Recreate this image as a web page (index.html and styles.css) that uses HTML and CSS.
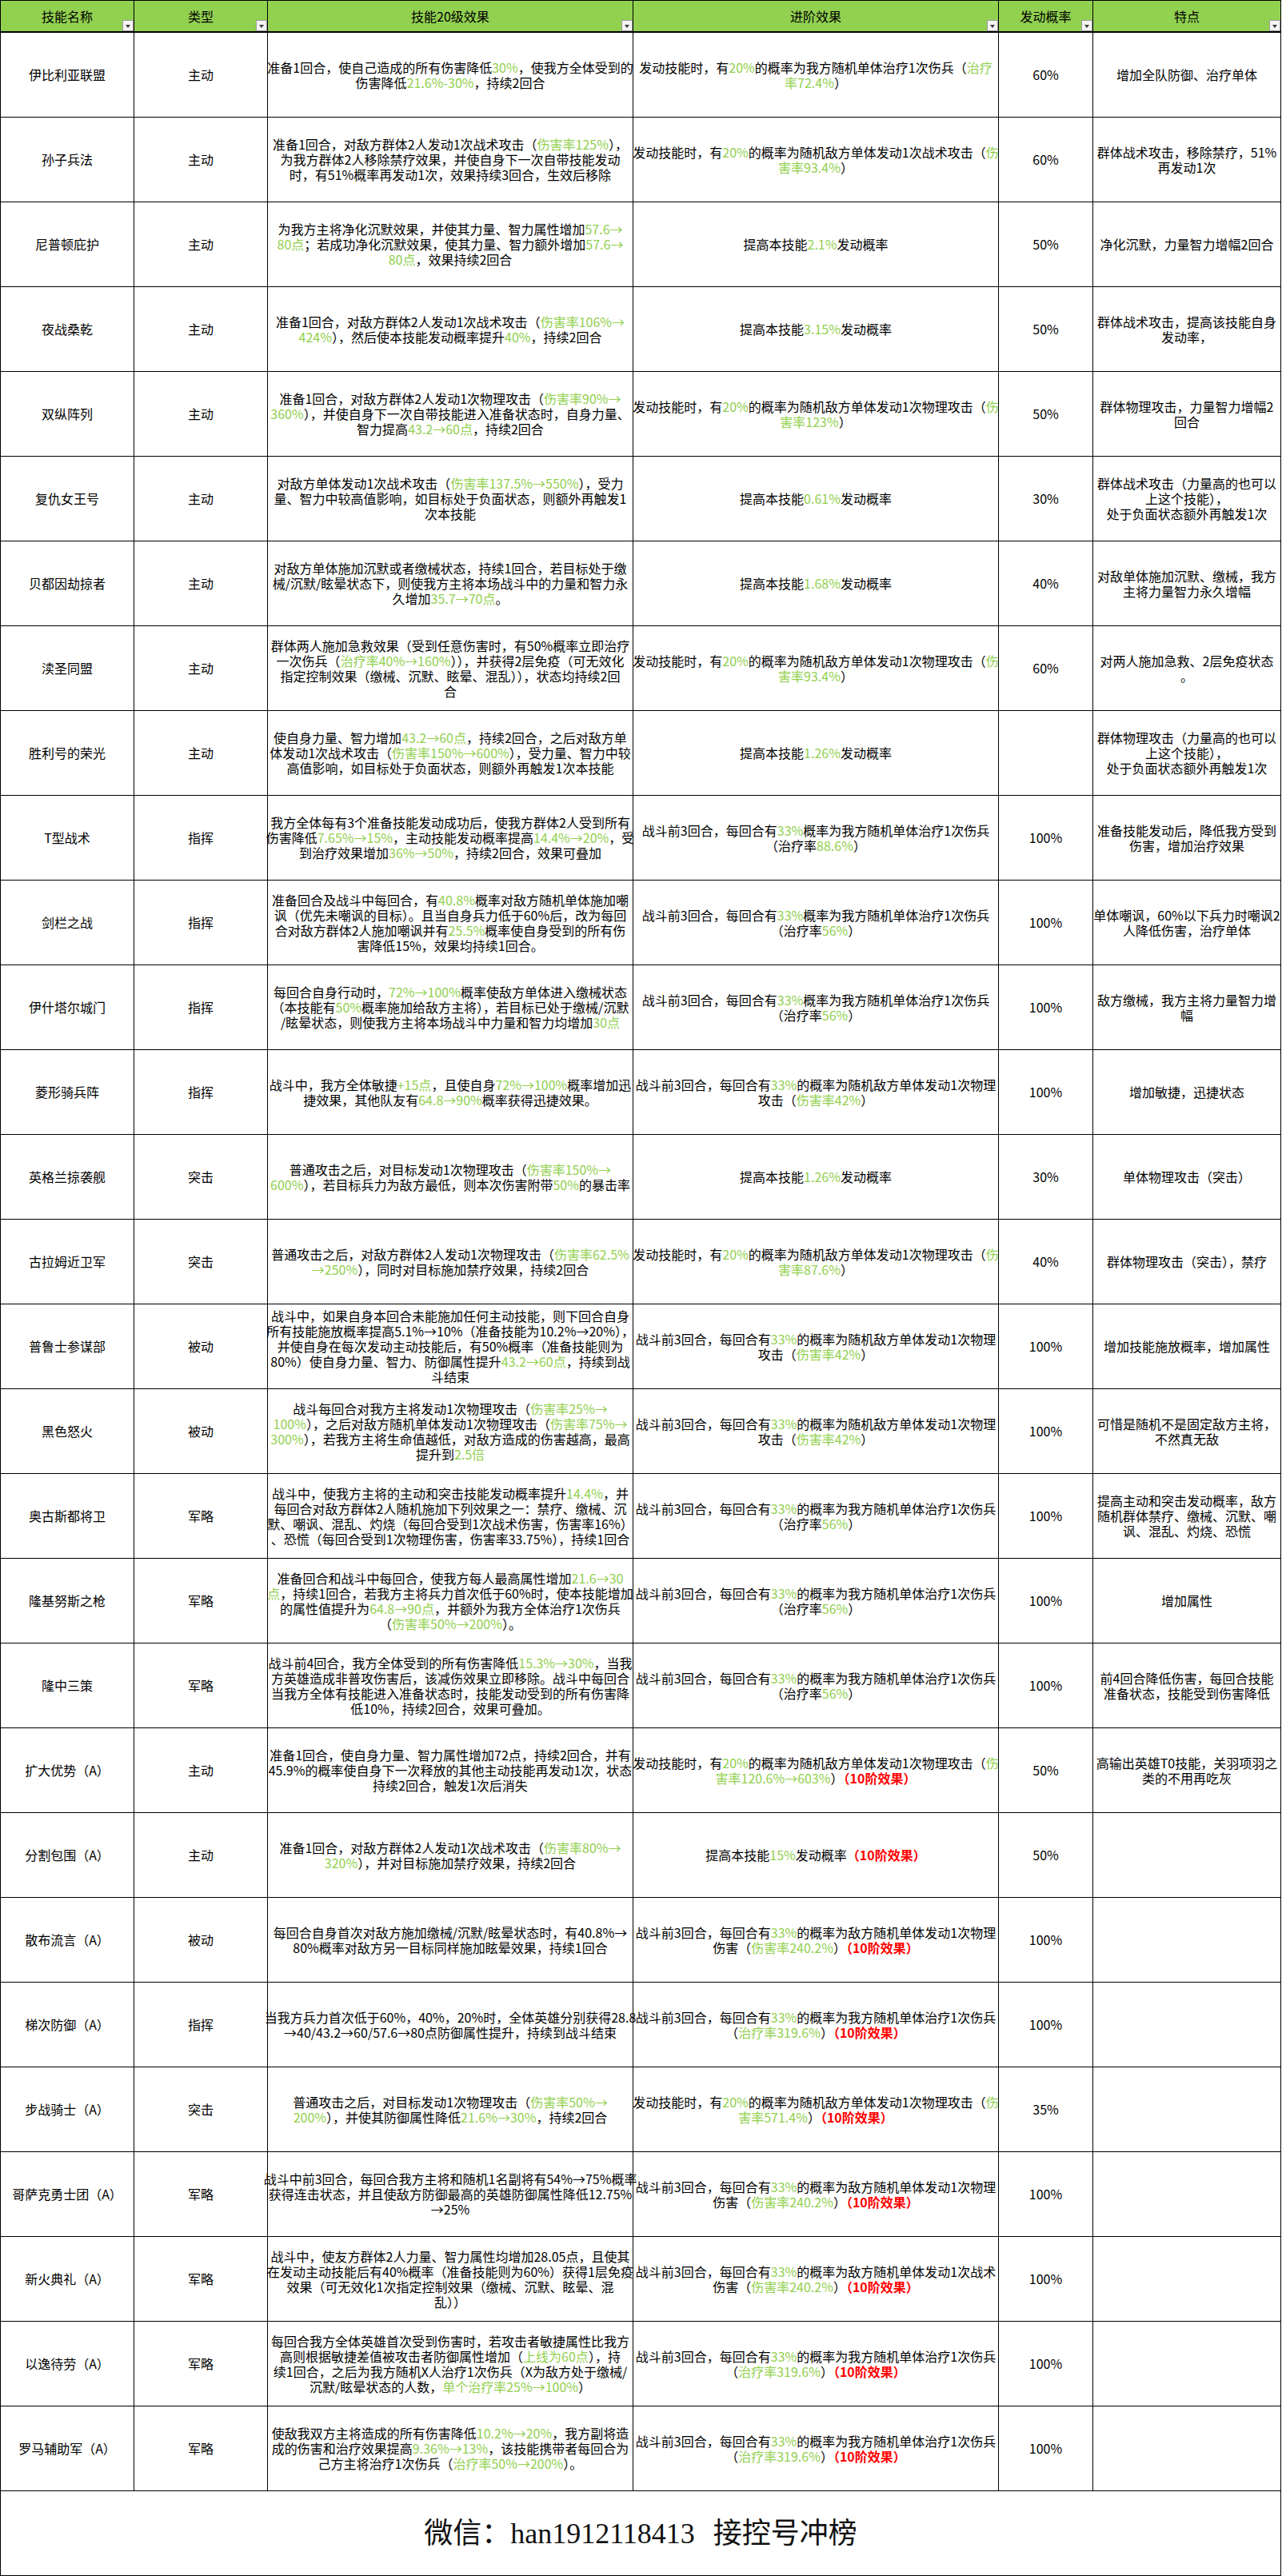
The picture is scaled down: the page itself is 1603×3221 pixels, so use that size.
FILE: index.html
```html
<!DOCTYPE html>
<html lang="zh-CN">
<head>
<meta charset="utf-8">
<title>技能表</title>
<link rel="stylesheet" href="styles.css">
</head>
<body>
<div class="sheet">
  <div class="hd">技能名称<span class="fb"></span></div>
  <div class="hd">类型<span class="fb"></span></div>
  <div class="hd">技能20级效果<span class="fb"></span></div>
  <div class="hd">进阶效果<span class="fb"></span></div>
  <div class="hd">发动概率<span class="fb"></span></div>
  <div class="hd">特点<span class="fb"></span></div>

  <div><p>伊比利亚联盟</p></div>
  <div><p>主动</p></div>
  <div><p>准备1回合，使自己造成的所有伤害降低<span class="g">30%</span>，使我方全体受到的<br>伤害降低<span class="g">21.6%-30%</span>，持续2回合</p></div>
  <div><p>发动技能时，有<span class="g">20%</span>的概率为我方随机单体治疗1次伤兵（<span class="g">治疗</span><br><span class="g">率72.4%</span>）</p></div>
  <div><p>60%</p></div>
  <div><p>增加全队防御、治疗单体</p></div>

  <div><p>孙子兵法</p></div>
  <div><p>主动</p></div>
  <div><p>准备1回合，对敌方群体2人发动1次战术攻击（<span class="g">伤害率125%</span>），<br>为我方群体2人移除禁疗效果，并使自身下一次自带技能发动<br>时，有51%概率再发动1次，效果持续3回合，生效后移除</p></div>
  <div><p>发动技能时，有<span class="g">20%</span>的概率为随机敌方单体发动1次战术攻击（<span class="g">伤</span><br><span class="g">害率93.4%</span>）</p></div>
  <div><p>60%</p></div>
  <div><p>群体战术攻击，移除禁疗，51%<br>再发动1次</p></div>

  <div><p>尼普顿庇护</p></div>
  <div><p>主动</p></div>
  <div><p>为我方主将净化沉默效果，并使其力量、智力属性增加<span class="g">57.6→</span><br><span class="g">80点</span>；若成功净化沉默效果，使其力量、智力额外增加<span class="g">57.6→</span><br><span class="g">80点</span>，效果持续2回合</p></div>
  <div><p>提高本技能<span class="g">2.1%</span>发动概率</p></div>
  <div><p>50%</p></div>
  <div><p>净化沉默，力量智力增幅2回合</p></div>

  <div><p>夜战桑乾</p></div>
  <div><p>主动</p></div>
  <div><p>准备1回合，对敌方群体2人发动1次战术攻击（<span class="g">伤害率106%→</span><br><span class="g">424%</span>），然后使本技能发动概率提升<span class="g">40%</span>，持续2回合</p></div>
  <div><p>提高本技能<span class="g">3.15%</span>发动概率</p></div>
  <div><p>50%</p></div>
  <div><p>群体战术攻击，提高该技能自身<br>发动率，</p></div>

  <div><p>双纵阵列</p></div>
  <div><p>主动</p></div>
  <div><p>准备1回合，对敌方群体2人发动1次物理攻击（<span class="g">伤害率90%→</span><br><span class="g">360%</span>），并使自身下一次自带技能进入准备状态时，自身力量、<br>智力提高<span class="g">43.2→60点</span>，持续2回合</p></div>
  <div><p>发动技能时，有<span class="g">20%</span>的概率为随机敌方单体发动1次物理攻击（<span class="g">伤</span><br><span class="g">害率123%</span>）</p></div>
  <div><p>50%</p></div>
  <div><p>群体物理攻击，力量智力增幅2<br>回合</p></div>

  <div><p>复仇女王号</p></div>
  <div><p>主动</p></div>
  <div><p>对敌方单体发动1次战术攻击（<span class="g">伤害率137.5%→550%</span>），受力<br>量、智力中较高值影响，如目标处于负面状态，则额外再触发1<br>次本技能</p></div>
  <div><p>提高本技能<span class="g">0.61%</span>发动概率</p></div>
  <div><p>30%</p></div>
  <div><p>群体战术攻击（力量高的也可以<br>上这个技能），<br>处于负面状态额外再触发1次</p></div>

  <div><p>贝都因劫掠者</p></div>
  <div><p>主动</p></div>
  <div><p>对敌方单体施加沉默或者缴械状态，持续1回合，若目标处于缴<br>械/沉默/眩晕状态下，则使我方主将本场战斗中的力量和智力永<br>久增加<span class="g">35.7→70点</span>。</p></div>
  <div><p>提高本技能<span class="g">1.68%</span>发动概率</p></div>
  <div><p>40%</p></div>
  <div><p>对敌单体施加沉默、缴械，我方<br>主将力量智力永久增幅</p></div>

  <div><p>渎圣同盟</p></div>
  <div><p>主动</p></div>
  <div><p>群体两人施加急救效果（受到任意伤害时，有50%概率立即治疗<br>一次伤兵（<span class="g">治疗率40%→160%</span>）），并获得2层免疫（可无效化<br>指定控制效果（缴械、沉默、眩晕、混乱）），状态均持续2回<br>合</p></div>
  <div><p>发动技能时，有<span class="g">20%</span>的概率为随机敌方单体发动1次物理攻击（<span class="g">伤</span><br><span class="g">害率93.4%</span>）</p></div>
  <div><p>60%</p></div>
  <div><p>对两人施加急救、2层免疫状态<br>。</p></div>

  <div><p>胜利号的荣光</p></div>
  <div><p>主动</p></div>
  <div><p>使自身力量、智力增加<span class="g">43.2→60点</span>，持续2回合，之后对敌方单<br>体发动1次战术攻击（<span class="g">伤害率150%→600%</span>），受力量、智力中较<br>高值影响，如目标处于负面状态，则额外再触发1次本技能</p></div>
  <div><p>提高本技能<span class="g">1.26%</span>发动概率</p></div>
  <div><p></p></div>
  <div><p>群体物理攻击（力量高的也可以<br>上这个技能），<br>处于负面状态额外再触发1次</p></div>

  <div><p>T型战术</p></div>
  <div><p>指挥</p></div>
  <div><p>我方全体每有3个准备技能发动成功后，使我方群体2人受到所有<br>伤害降低<span class="g">7.65%→15%</span>，主动技能发动概率提高<span class="g">14.4%→20%</span>，受<br>到治疗效果增加<span class="g">36%→50%</span>，持续2回合，效果可叠加</p></div>
  <div><p>战斗前3回合，每回合有<span class="g">33%</span>概率为我方随机单体治疗1次伤兵<br>（治疗率<span class="g">88.6%</span>）</p></div>
  <div><p>100%</p></div>
  <div><p>准备技能发动后，降低我方受到<br>伤害，增加治疗效果</p></div>

  <div><p>剑栏之战</p></div>
  <div><p>指挥</p></div>
  <div><p>准备回合及战斗中每回合，有<span class="g">40.8%</span>概率对敌方随机单体施加嘲<br>讽（优先未嘲讽的目标）。且当自身兵力低于60%后，改为每回<br>合对敌方群体2人施加嘲讽并有<span class="g">25.5%</span>概率使自身受到的所有伤<br>害降低15%，效果均持续1回合。</p></div>
  <div><p>战斗前3回合，每回合有<span class="g">33%</span>概率为我方随机单体治疗1次伤兵<br>（治疗率<span class="g">56%</span>）</p></div>
  <div><p>100%</p></div>
  <div><p>单体嘲讽，60%以下兵力时嘲讽2<br>人降低伤害，治疗单体</p></div>

  <div><p>伊什塔尔城门</p></div>
  <div><p>指挥</p></div>
  <div><p>每回合自身行动时，<span class="g">72%→100%</span>概率使敌方单体进入缴械状态<br>（本技能有<span class="g">50%</span>概率施加给敌方主将），若目标已处于缴械/沉默<br>/眩晕状态，则使我方主将本场战斗中力量和智力均增加<span class="g">30点</span></p></div>
  <div><p>战斗前3回合，每回合有<span class="g">33%</span>概率为我方随机单体治疗1次伤兵<br>（治疗率<span class="g">56%</span>）</p></div>
  <div><p>100%</p></div>
  <div><p>敌方缴械，我方主将力量智力增<br>幅</p></div>

  <div><p>菱形骑兵阵</p></div>
  <div><p>指挥</p></div>
  <div><p>战斗中，我方全体敏捷<span class="g">+15点</span>，且使自身<span class="g">72%→100%</span>概率增加迅<br>捷效果，其他队友有<span class="g">64.8→90%</span>概率获得迅捷效果。</p></div>
  <div><p>战斗前3回合，每回合有<span class="g">33%</span>的概率为随机敌方单体发动1次物理<br>攻击（<span class="g">伤害率42%</span>）</p></div>
  <div><p>100%</p></div>
  <div><p>增加敏捷，迅捷状态</p></div>

  <div><p>英格兰掠袭舰</p></div>
  <div><p>突击</p></div>
  <div><p>普通攻击之后，对目标发动1次物理攻击（<span class="g">伤害率150%→</span><br><span class="g">600%</span>），若目标兵力为敌方最低，则本次伤害附带<span class="g">50%</span>的暴击率</p></div>
  <div><p>提高本技能<span class="g">1.26%</span>发动概率</p></div>
  <div><p>30%</p></div>
  <div><p>单体物理攻击（突击）</p></div>

  <div><p>古拉姆近卫军</p></div>
  <div><p>突击</p></div>
  <div><p>普通攻击之后，对敌方群体2人发动1次物理攻击（<span class="g">伤害率62.5%</span><br><span class="g">→250%</span>），同时对目标施加禁疗效果，持续2回合</p></div>
  <div><p>发动技能时，有<span class="g">20%</span>的概率为随机敌方单体发动1次物理攻击（<span class="g">伤</span><br><span class="g">害率87.6%</span>）</p></div>
  <div><p>40%</p></div>
  <div><p>群体物理攻击（突击），禁疗</p></div>

  <div><p>普鲁士参谋部</p></div>
  <div><p>被动</p></div>
  <div><p>战斗中，如果自身本回合未能施加任何主动技能，则下回合自身<br>所有技能施放概率提高5.1%→10%（准备技能为10.2%→20%），<br>并使自身在每次发动主动技能后，有50%概率（准备技能则为<br>80%）使自身力量、智力、防御属性提升<span class="g">43.2→60点</span>，持续到战<br>斗结束</p></div>
  <div><p>战斗前3回合，每回合有<span class="g">33%</span>的概率为随机敌方单体发动1次物理<br>攻击（<span class="g">伤害率42%</span>）</p></div>
  <div><p>100%</p></div>
  <div><p>增加技能施放概率，增加属性</p></div>

  <div><p>黑色怒火</p></div>
  <div><p>被动</p></div>
  <div><p>战斗每回合对我方主将发动1次物理攻击（<span class="g">伤害率25%→</span><br><span class="g">100%</span>），之后对敌方随机单体发动1次物理攻击（<span class="g">伤害率75%→</span><br><span class="g">300%</span>），若我方主将生命值越低，对敌方造成的伤害越高，最高<br>提升到<span class="g">2.5倍</span></p></div>
  <div><p>战斗前3回合，每回合有<span class="g">33%</span>的概率为随机敌方单体发动1次物理<br>攻击（<span class="g">伤害率42%</span>）</p></div>
  <div><p>100%</p></div>
  <div><p>可惜是随机不是固定敌方主将，<br>不然真无敌</p></div>

  <div><p>奥古斯都将卫</p></div>
  <div><p>军略</p></div>
  <div><p>战斗中，使我方主将的主动和突击技能发动概率提升<span class="g">14.4%</span>，并<br>每回合对敌方群体2人随机施加下列效果之一：禁疗、缴械、沉<br>默、嘲讽、混乱、灼烧（每回合受到1次战术伤害，伤害率16%）<br>、恐慌（每回合受到1次物理伤害，伤害率33.75%），持续1回合</p></div>
  <div><p>战斗前3回合，每回合有<span class="g">33%</span>的概率为我方随机单体治疗1次伤兵<br>（治疗率<span class="g">56%</span>）</p></div>
  <div><p>100%</p></div>
  <div><p>提高主动和突击发动概率，敌方<br>随机群体禁疗、缴械、沉默、嘲<br>讽、混乱、灼烧、恐慌</p></div>

  <div><p>隆基努斯之枪</p></div>
  <div><p>军略</p></div>
  <div><p>准备回合和战斗中每回合，使我方每人最高属性增加<span class="g">21.6→30</span><br><span class="g">点</span>，持续1回合，若我方主将兵力首次低于60%时，使本技能增加<br>的属性值提升为<span class="g">64.8→90点</span>，并额外为我方全体治疗1次伤兵<br>（<span class="g">伤害率50%→200%</span>）。</p></div>
  <div><p>战斗前3回合，每回合有<span class="g">33%</span>的概率为我方随机单体治疗1次伤兵<br>（治疗率<span class="g">56%</span>）</p></div>
  <div><p>100%</p></div>
  <div><p>增加属性</p></div>

  <div><p>隆中三策</p></div>
  <div><p>军略</p></div>
  <div><p>战斗前4回合，我方全体受到的所有伤害降低<span class="g">15.3%→30%</span>，当我<br>方英雄造成非普攻伤害后，该减伤效果立即移除。战斗中每回合<br>当我方全体有技能进入准备状态时，技能发动受到的所有伤害降<br>低10%，持续2回合，效果可叠加。</p></div>
  <div><p>战斗前3回合，每回合有<span class="g">33%</span>的概率为我方随机单体治疗1次伤兵<br>（治疗率<span class="g">56%</span>）</p></div>
  <div><p>100%</p></div>
  <div><p>前4回合降低伤害，每回合技能<br>准备状态，技能受到伤害降低</p></div>

  <div><p>扩大优势（A）</p></div>
  <div><p>主动</p></div>
  <div><p>准备1回合，使自身力量、智力属性增加72点，持续2回合，并有<br>45.9%的概率使自身下一次释放的其他主动技能再发动1次，状态<br>持续2回合，触发1次后消失</p></div>
  <div><p>发动技能时，有<span class="g">20%</span>的概率为随机敌方单体发动1次物理攻击（<span class="g">伤</span><br><span class="g">害率120.6%→603%</span>）<span class="r">（10阶效果）</span></p></div>
  <div><p>50%</p></div>
  <div><p>高输出英雄T0技能，关羽项羽之<br>类的不用再吃灰</p></div>

  <div><p>分割包围（A）</p></div>
  <div><p>主动</p></div>
  <div><p>准备1回合，对敌方群体2人发动1次战术攻击（<span class="g">伤害率80%→</span><br><span class="g">320%</span>），并对目标施加禁疗效果，持续2回合</p></div>
  <div><p>提高本技能<span class="g">15%</span>发动概率<span class="r">（10阶效果）</span></p></div>
  <div><p>50%</p></div>
  <div><p></p></div>

  <div><p>散布流言（A）</p></div>
  <div><p>被动</p></div>
  <div><p>每回合自身首次对敌方施加缴械/沉默/眩晕状态时，有40.8%→<br>80%概率对敌方另一目标同样施加眩晕效果，持续1回合</p></div>
  <div><p>战斗前3回合，每回合有<span class="g">33%</span>的概率为敌方随机单体发动1次物理<br>伤害（<span class="g">伤害率240.2%</span>）<span class="r">（10阶效果）</span></p></div>
  <div><p>100%</p></div>
  <div><p></p></div>

  <div><p>梯次防御（A）</p></div>
  <div><p>指挥</p></div>
  <div><p>当我方兵力首次低于60%，40%，20%时，全体英雄分别获得28.8<br>→40/43.2→60/57.6→80点防御属性提升，持续到战斗结束</p></div>
  <div><p>战斗前3回合，每回合有<span class="g">33%</span>的概率为我方随机单体治疗1次伤兵<br>（<span class="g">治疗率319.6%</span>）<span class="r">（10阶效果）</span></p></div>
  <div><p>100%</p></div>
  <div><p></p></div>

  <div><p>步战骑士（A）</p></div>
  <div><p>突击</p></div>
  <div><p>普通攻击之后，对目标发动1次物理攻击（<span class="g">伤害率50%→</span><br><span class="g">200%</span>），并使其防御属性降低<span class="g">21.6%→30%</span>，持续2回合</p></div>
  <div><p>发动技能时，有<span class="g">20%</span>的概率为随机敌方单体发动1次物理攻击（<span class="g">伤</span><br><span class="g">害率571.4%</span>）<span class="r">（10阶效果）</span></p></div>
  <div><p>35%</p></div>
  <div><p></p></div>

  <div><p>哥萨克勇士团（A）</p></div>
  <div><p>军略</p></div>
  <div><p>战斗中前3回合，每回合我方主将和随机1名副将有54%→75%概率<br>获得连击状态，并且使敌方防御最高的英雄防御属性降低12.75%<br>→25%</p></div>
  <div><p>战斗前3回合，每回合有<span class="g">33%</span>的概率为敌方随机单体发动1次物理<br>伤害（<span class="g">伤害率240.2%</span>）<span class="r">（10阶效果）</span></p></div>
  <div><p>100%</p></div>
  <div><p></p></div>

  <div><p>新火典礼（A）</p></div>
  <div><p>军略</p></div>
  <div><p>战斗中，使友方群体2人力量、智力属性均增加28.05点，且使其<br>在发动主动技能后有40%概率（准备技能则为60%）获得1层免疫<br>效果（可无效化1次指定控制效果（缴械、沉默、眩晕、混<br>乱））</p></div>
  <div><p>战斗前3回合，每回合有<span class="g">33%</span>的概率为敌方随机单体发动1次战术<br>伤害（<span class="g">伤害率240.2%</span>）<span class="r">（10阶效果）</span></p></div>
  <div><p>100%</p></div>
  <div><p></p></div>

  <div><p>以逸待劳（A）</p></div>
  <div><p>军略</p></div>
  <div><p>每回合我方全体英雄首次受到伤害时，若攻击者敏捷属性比我方<br>高则根据敏捷差值被攻击者防御属性增加（<span class="g">上线为60点</span>），持<br>续1回合，之后为我方随机X人治疗1次伤兵（X为敌方处于缴械/<br>沉默/眩晕状态的人数，<span class="g">单个治疗率25%→100%</span>）</p></div>
  <div><p>战斗前3回合，每回合有<span class="g">33%</span>的概率为我方随机单体治疗1次伤兵<br>（<span class="g">治疗率319.6%</span>）<span class="r">（10阶效果）</span></p></div>
  <div><p>100%</p></div>
  <div><p></p></div>

  <div><p>罗马辅助军（A）</p></div>
  <div><p>军略</p></div>
  <div><p>使敌我双方主将造成的所有伤害降低<span class="g">10.2%→20%</span>，我方副将造<br>成的伤害和治疗效果提高<span class="g">9.36%→13%</span>，该技能携带者每回合为<br>己方主将治疗1次伤兵（<span class="g">治疗率50%→200%</span>）。</p></div>
  <div><p>战斗前3回合，每回合有<span class="g">33%</span>的概率为我方随机单体治疗1次伤兵<br>（<span class="g">治疗率319.6%</span>）<span class="r">（10阶效果）</span></p></div>
  <div><p>100%</p></div>
  <div><p></p></div>

  <div class="ft"><p>微信：han1912118413 接控号冲榜</p></div>
</div>
</body>
</html>
```

FILE: styles.css
```css
html, body {
  margin: 0;
  padding: 0;
  background: #ffffff;
}

body {
  font-family: "Noto Sans CJK SC", "Noto Sans CJK JP", sans-serif;
  font-size: 16px;
  line-height: 19px;
  color: #000000;
}

.sheet {
  display: grid;
  grid-template-columns: 167px 167px 457px 457px 118px 235px;
  grid-template-rows: 40px repeat(29, 106px) 106px;
  width: 1601px;
  border-left: 1px solid #000;
  border-top: 1px solid #000;
}

.sheet > div {
  box-sizing: border-box;
  border-right: 1px solid #000;
  border-bottom: 1px solid #000;
  display: flex;
  align-items: center;
  justify-content: center;
  text-align: center;
  white-space: nowrap;
  min-width: 0;
}

.sheet p {
  margin: 0;
}

.sheet > .hd {
  position: relative;
  background: #92d050;
  border-bottom-width: 2px;
}

.fb {
  position: absolute;
  right: 0;
  bottom: 0;
  width: 14px;
  height: 14px;
  box-sizing: border-box;
  border: 1px solid #9c9c9c;
  background: #f4f4f4;
}

.fb::after {
  content: "";
  position: absolute;
  left: 3px;
  top: 5px;
  border-left: 3.5px solid transparent;
  border-right: 3.5px solid transparent;
  border-top: 4px solid #3a3a3a;
}

.g {
  color: #92d050;
}

.r {
  color: #ff0000;
  font-weight: bold;
}

.sheet > .ft {
  grid-column: 1 / -1;
  font-family: "Liberation Serif", "Noto Sans CJK SC", serif;
  font-size: 36px;
  line-height: 40px;
  word-spacing: 14px;
  color: #111;
}
```
